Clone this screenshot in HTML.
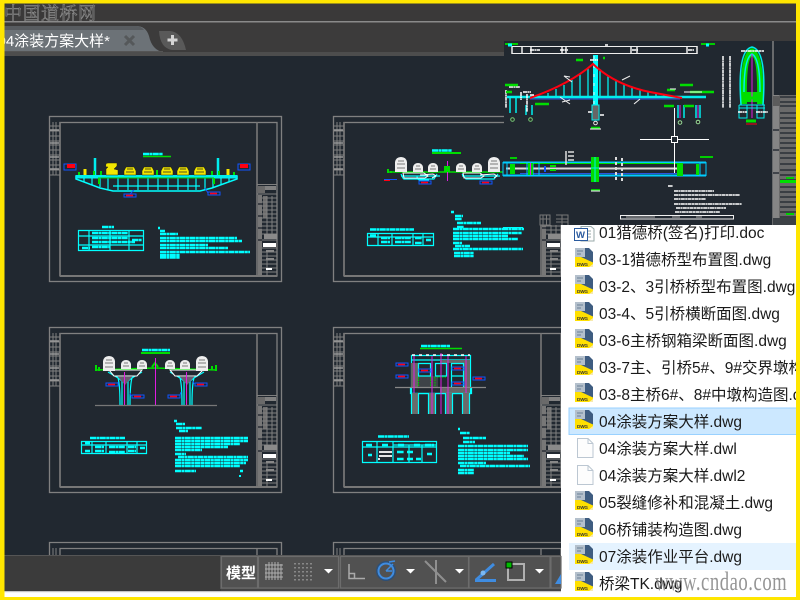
<!DOCTYPE html>
<html><head><meta charset="utf-8"><title>04涂装方案大样</title>
<style>
html,body{margin:0;padding:0;width:800px;height:600px;overflow:hidden;background:#212830}
svg{position:absolute;left:0;top:0;display:block;overflow:hidden}
.f{fill:none;stroke:#808080;stroke-width:1.3}
.g{fill:none;stroke:#808080;stroke-width:1}
.c{fill:none;stroke:#0ff;stroke-width:1.2}
.t{fill:none;stroke:#0ff;stroke-width:2.4;stroke-dasharray:6 .4 3 .4}
.w{fill:none;stroke:#fff;stroke-width:1.5;stroke-dasharray:4 .4 2 .4}
.b{fill:none;stroke:#15f;stroke-width:1}
.r{fill:none;stroke:#f01;stroke-width:1.6}
.m{fill:none;stroke:#e01ce0;stroke-width:1}
.l{font:15.5px "Liberation Sans","Noto Sans CJK SC",sans-serif;fill:#1a1a1a}
</style></head><body>
<svg width="800" height="600" viewBox="0 0 800 600" xmlns="http://www.w3.org/2000/svg">
<defs>
<g id="frame">
 <rect class="f" x="49.500" y="116.500" width="232" height="165"/>
 <rect class="f" x="60" y="122.500" width="217" height="153.500" />
 <path d="M60 276H277" stroke="#777" stroke-width="2"/>
 <path d="M60 122V276M257 122V276" stroke="#777" stroke-width="1.600"/>
 <path class="g" d="M50 126H60M50 131H60M50 136H60M50 141H60M50 145H60M50 150H60M50 155H60M50 160H60M50 165H60M50 170H60M50 175H60M53 122V175M56 122V175"/>
 <path d="M50 130H59M50 143H59M50 157H59M50 169H59" stroke="#999" stroke-width="1.500"/>
 <path class="g" d="M257 184.500H277M257 194H277"/>
 <rect x="258" y="186" width="7" height="7" fill="#6a6a6a"/>
 <rect x="265" y="186" width="11" height="4" fill="#808080"/>
 <rect x="258" y="195" width="4" height="81" fill="#777"/>
 <rect x="263" y="196" width="4" height="22" fill="#6c6c6c"/>
 <path class="g" d="M262 198H277M262 202H277M262 206H277M262 210H277M262 214H277M262 218H277M262 222H277M262 226H277M262 230H277M262 234H277M262 240H277M262 248H277M262 252H277M262 256H277M262 260H277M262 264H277M262 268H277M262 272H277M267 196V234M272 196V234M267 250V276"/>
 <path d="M258 204H262M258 216H262M258 228H262M258 240H262" stroke="#2a2f36" stroke-width="1.500"/>
 <rect x="264" y="234" width="13" height="5" fill="#8a8a8a"/>
 <rect x="263" y="243" width="13" height="4" fill="#fff"/>
 <rect x="266" y="250" width="8" height="2" fill="#888"/>
 <rect x="266" y="258" width="8" height="2" fill="#888"/>
 <rect x="266" y="268" width="6" height="2" fill="#fff"/>
</g>
<g id="frametop">
 <path d="M49.500 556V542.500H281.500V556M60 556V548.500H277V556M257 548V556" fill="none" stroke="#808080" stroke-width="1.300"/>
 <path class="g" d="M53 548V556M56 548V556"/>
</g>
<g id="veh"><path d="M-6 0V-4L-4 -8H4L6 -4V0Z" fill="#f2e600" stroke="#221" stroke-width=".5"/><path d="M-4 -3H4M-3 -6H3" stroke="#222" stroke-width=".8"/></g>
<g id="wv"><path d="M-5 0V-5Q-4 -9 0 -9Q4 -9 5 -5V0Z" fill="#eee"/><path d="M-3 -3H3M-2 -6H2" stroke="#555" stroke-width=".8"/></g>
<g id="wv2"><path d="M-6 1V-9Q-5 -14 0 -14Q5 -14 6 -9V1Z" fill="#eee"/><path d="M-4 -3H4M-4 -7H4M-3 -10H3" stroke="#555" stroke-width=".8"/></g>
<g id="lab"><path class="b" d="M0 0H12V-3H0Z"/><path class="r" d="M2 -1.500H9"/></g>
<g id="dwg">
 <path d="M0 0H14L18 4V19H0Z" fill="#3e5c80"/>
 <rect x="0" y="0" width="10" height="9" fill="#b4c0cc"/>
 <path d="M2 3H8M2 6H6" stroke="#6a7f96" stroke-width="1"/>
 <path d="M0 19V9H6L18 14.500V19Z" fill="#ffe000"/>
 <path d="M14 19L18 16V19Z" fill="#f7eab0"/>
 <text x="2" y="18" font-family="Liberation Sans,sans-serif" font-size="4.600" font-weight="700" fill="#333" textLength="11">DWG</text>
</g>
<g id="blank"><path d="M1.500 .5H12L17 5.500V19.500H1.500Z" fill="#fdfdfd" stroke="#bcc7d2"/><path d="M12 .5V5.500H17" fill="none" stroke="#bcc7d2"/></g>
<path id="tri" d="M0 0H9L4.500 4.500Z" fill="#fff"/>
</defs>

<rect width="800" height="600" fill="#212830"/>
<!-- header -->
<rect x="0" y="0" width="800" height="21" fill="#3a3939"/>
<rect x="0" y="21" width="800" height="1.500" fill="#8a8a8a"/>
<rect x="0" y="22.500" width="800" height="33" fill="#3c3b3b"/>
<text x="4" y="20" font-family="'Noto Serif CJK SC','Liberation Serif',serif" font-size="18" textLength="92" fill="none" stroke="#8a8a8a" stroke-width=".6">中国道桥网</text>
<path d="M0 26H136Q146 26 149 36Q152 50 163 52V53H0Z" fill="#6c7277"/>
<path d="M0 26H136Q141 26 144 30H0Z" fill="#585c60"/>
<path d="M0 51H163V53H0Z" fill="#555"/>
<path d="M159 31H170Q182 32 186 50H172Q160 48 159 31Z" fill="#595959"/>
<rect x="0" y="52" width="800" height="4" fill="#4d4d4d"/>
<path d="M172.500 35V45M167.500 40H177.500" stroke="#d4d4d4" stroke-width="3"/>
<text x="-2.500" y="46" font-family="'Liberation Sans','Noto Sans CJK SC',sans-serif" font-size="15" fill="#fff">04涂装方案大样*</text>
<path d="M125 36L134 45M134 36L125 45" stroke="#55585a" stroke-width="3"/>

<!-- frames -->
<use href="#frame"/>
<use href="#frame" x="284"/>
<use href="#frame" y="211"/>
<use href="#frame" x="284" y="211"/>
<use href="#frametop"/>
<use href="#frametop" x="284"/>

<!-- drawing 1 -->
<path class="t" d="M143 154H163"/><path d="M143 156.500H171" stroke="#0d0" stroke-width="1.500"/>
<path d="M76 176H237V179L212 188L200 191H113L100 188L76 179Z" fill="none" stroke="#0ff" stroke-width="1.500"/>
<rect x="76" y="175" width="161" height="3.500" fill="#0ee"/>
<path class="c" d="M84 178V182M92 178V185M100 178V187M108 178V189M118 178V190M128 178V190M138 178V190M148 178V190M158 178V190M168 178V190M178 178V190M188 178V190M196 178V190M205 178V189M213 178V187M221 178V185M229 178V182M113 186H200"/>
<path d="M95 158V175M218 158V175" stroke="#0ee" stroke-width="2.500"/>
<path d="M98 178H214" stroke="#0c0" stroke-width="1"/>
<path d="M79 175V172M94 175V171M101 175V171M157 175V170M212 175V171M219 175V171M234 175V172M99 178V184M214 178V184" stroke="#0d0" stroke-width="2"/>
<path d="M85 175V169M228 175V169" stroke="#f2e600" stroke-width="3"/>
<use href="#veh" x="130" y="175"/><use href="#veh" x="148" y="175"/><use href="#veh" x="167" y="175" /><use href="#veh" x="183" y="175"/><use href="#veh" x="200" y="175"/>
<path d="M106 175V169L108 167H106Q105 163 108 163H117V166L114 169L118 170V175Z" fill="#f2e600" stroke="#221" stroke-width=".5"/>
<rect x="64" y="164" width="12" height="6" fill="none" stroke="#15f"/><rect x="67" y="164" width="8" height="4" fill="#f01"/>
<rect x="238" y="164" width="12" height="6" fill="none" stroke="#15f"/><rect x="240" y="164" width="8" height="4" fill="#f01"/>
<use href="#lab" x="124" y="197"/><use href="#lab" x="208" y="195"/>
<path class="b" d="M130 194L134 190M208 193L205 188"/>
<path class="t" d="M102 227H114"/>
<path class="c" d="M78.500 230.500H143.500V250.500H78.500ZM78 236H144M78 245H144M89 230V250M110 230V250M129 230V250"/>
<path class="t" d="M92 233H128M92 238H128M92 242H135M92 247H110M82 248H90M132 240H142"/>
<path class="t" d="M158 228H160M160 231H165M160 234H178M160 238H237M160 241H242M160 245H208M160 248H228M160 252H250M160 255H180M160 257.500H180"/>

<!-- drawing 2 -->
<path class="t" d="M432 150.500H452"/><path d="M432 153H461" stroke="#0d0" stroke-width="2"/>
<path d="M388 172H447M447 172H503" stroke="#0d0" stroke-width="1.500"/>
<path d="M388 173V169M391 173V171" stroke="#0d0" stroke-width="2"/>
<path d="M401 174Q403 179 404 179L434 179L437 174M401 176H440M417 176Q417 180 420 180H429" class="c"/>
<path d="M403 173H424L428 176L425 178H404ZM420 175L433 174L436 176L432 178" fill="none" stroke="#fff" stroke-width="1"/>
<path d="M462 174L466 179H494L498 174M462 176H500" class="c"/>
<path d="M463 173H480L484 176L481 178H464ZM480 175L494 174L497 176L494 178" fill="none" stroke="#fff" stroke-width="1"/>
<use href="#wv2" x="401" y="171"/><use href="#wv" x="418" y="172"/><use href="#wv" x="433" y="172"/><use href="#wv" x="461" y="172"/><use href="#wv" x="477" y="172"/><use href="#wv2" x="494" y="171"/>
<path class="m" d="M447.500 161V181" stroke-width="1.500"/>
<path d="M444 166L450 166V172H444Z" fill="#0d0"/>
<path d="M384 179.500H397" stroke="#15f"/><path d="M384 180.500H390" stroke="#f01"/>
<use href="#lab" x="419" y="184"/><use href="#lab" x="480" y="184"/>
<path class="t" d="M370 229.500H414"/>
<path class="c" d="M367.500 233.500H433.500V245.500H367.500ZM367 237H433M378 233V245M392 233V245M413 233V245M423 233V245"/>
<path class="t" d="M370 235.500H376M381 238H390M395 238H411M415 238H422M381 242H390M395 242H411M415 243H422M426 240H431"/>
<path class="t" d="M451 212H454M455 216H463M455 219H462M457 223H481M457 227H464M453 229H524M453 233H522M453 236H508M453 239H518M453 243H462M455 246H470M453 249H523M454 253H474M454 256H474"/>

<!-- drawing 3 -->
<path class="t" d="M142 350H170"/><path d="M141 353H170" stroke="#0d0" stroke-width="2"/>
<path d="M95 370L155 368L217 370" fill="none" stroke="#0d0" stroke-width="1.500"/>
<path d="M96 371V365M99 371V367M152 367L155 363L158 367M212 370V366M216 371V365" stroke="#0d0" stroke-width="2" fill="none"/>
<path class="c" d="M108 372L118 378Q120 385 120 405M142 372L132 378Q130 385 130 405M112 373L122 381V405M138 373L128 381V405M170 372L180 378Q182 385 182 405M204 372L194 378Q192 385 192 405M174 373L184 381V405M200 373L190 381V405"/>
<path d="M109 370H142L137 376H114ZM170 370H203L197 376H175Z" fill="#212830" stroke="#fff" stroke-width="1"/>
<path d="M118 377L125 385L132 377ZM180 377L187 385L194 377Z" fill="#6a5a70"/>
<use href="#wv2" x="109" y="370"/><use href="#wv" x="126" y="369"/><use href="#wv" x="142" y="369"/><use href="#wv" x="170" y="369"/><use href="#wv" x="185" y="369"/><use href="#wv2" x="202" y="370"/>
<path class="m" d="M155.500 358V405M124.500 372V405M186.500 372V405" stroke-width="1.300"/>
<path d="M95 405.500H217" stroke="#777" stroke-width="1.200"/>
<use href="#lab" x="106" y="386"/><use href="#lab" x="132" y="398"/><use href="#lab" x="168" y="398"/><use href="#lab" x="195" y="386"/>
<path class="b" d="M118 385L118 382M131 396L130 393M180 395L181 392M194 384L193 381"/>
<path class="t" d="M90 438H125"/>
<path class="c" d="M81.500 441.500H146.500V453.500H81.500ZM81 445H147M92 441V453M106 441V453M127 441V453M137 441V453"/>
<path class="t" d="M85 443H90M95 447H104M109 447H125M128 447H136M140 448H145M85 451H90M95 451H104M109 452H125M128 451H136"/>
<path class="t" d="M174 421H177M176 424H185M176 428H202M179 431H188M175 438H248M175 441H248M175 444H240M175 447H228M175 450H202M175 454H186M178 457H248M175 460H248M175 463H246M175 466H240M175 471H196M240 471H243"/>
<path d="M239 476H241" stroke="#0ff" stroke-width="2"/>

<!-- drawing 4 -->
<path class="t" d="M421 346H450"/><path d="M420 348.500H462" stroke="#0d0" stroke-width="1.500"/>
<path class="c" d="M411.500 355.500H470.500V393.500H411.500ZM411 360H470"/>
<path d="M412 355H470" stroke="#fff" stroke-width="1.500" stroke-dasharray="3 4"/>
<rect x="411" y="363" width="7" height="24" fill="#666"/>
<rect x="440" y="360" width="30" height="3" fill="#666"/>
<rect x="418" y="376" width="20" height="11" fill="#3e4348"/>
<rect x="463" y="363" width="7" height="24" fill="#666"/>
<path class="c" d="M418.500 363.500H430.500V376H418.500ZM435.500 363.500H446.500V376H435.500ZM451.500 363.500H463.500V376H451.500ZM451.500 376V387M463.500 376V387"/>
<path d="M418.500 377V387M430.500 377V387M435 377V387M437 377H446" stroke="#0c0" stroke-dasharray="1.500 1" fill="none"/>
<path d="M395 387.500H486" stroke="#888" stroke-width="1.200"/>
<rect x="440" y="388" width="30" height="5" fill="#666"/>
<path class="c" d="M410.500 388V393.500H471.500V388"/>
<g fill="#6a6a6a"><rect x="412" y="393" width="6" height="21"/><rect x="429" y="393" width="6" height="21"/><rect x="446" y="393" width="6" height="21"/><rect x="463" y="393" width="6" height="21"/></g>
<path class="c" d="M411.500 394V414M418.500 394V414M428.500 394V414M435.500 394V414M445.500 394V414M452.500 394V414M462.500 394V414M469.500 394V414"/>
<path class="m" d="M414 356V393M432 356V414M441 353V414M448 356V414M466 356V393" stroke-width="1.300"/>
<use href="#lab" x="396" y="366"/><use href="#lab" x="396" y="378"/><use href="#lab" x="473" y="380"/><use href="#lab" x="452" y="385"/><use href="#lab" x="419" y="372"/><use href="#lab" x="452" y="370"/>
<path class="t" d="M378 436.500H409"/>
<path class="c" d="M362.500 441.500H436.500V462.500H362.500ZM362 447H436M377 441V462M393 441V462M409 445V462M422 445V462M393 445H436"/>
<path class="t" d="M366 445H372M382 445H388M398 445H404M414 445H420M425 445H434M368 455H372M397 452H404M407 452H413M397 459H404M407 459H413M416 459H421M427 454H432"/>
<path d="M379 452H392M379 456H392M378 459H380" stroke="#fff" stroke-width="1.800"/>
<path class="t" d="M458 429H460M460 433H470M463 438H486M463 442H475M458 446H528M458 450H528M458 453H510M458 456H524M458 459H528M458 463H486M460 466H530M458 470H474M458 473H474"/>

<!-- overlay drawing -->
<rect x="504" y="41" width="292" height="184" fill="#212830"/>
<path d="M512 46.500H697M512 53.500H697" stroke="#eee" stroke-width="1"/>
<path d="M512 46V54M697 46V54M522 46V54M531 46V54M562 46V54M566 46V54M631 46V54M637 46V54M687 46V54" stroke="#eee" stroke-width="1.500"/>
<path class="w" d="M530 50H540M560 50H568M605 45H608M632 50H638M688 50H694"/>
<path d="M505 44H518M701 44H715" stroke="#0c0" stroke-width="2"/><path d="M512 45H508M706 45H709" stroke="#0ff" stroke-width="3"/>
<path class="c" d="M540 96V98M548 93V98M556 89V98M564 85V98M572 80V98M580 74V98M588 68V98M600 70V98M608 76V98M616 81V98M624 84V98M632 87V98M640 90V98M648 92V98M656 94V98M664 95V98M672 96V98" stroke-width="1"/>
<path d="M507 97H706" stroke="#0ee" stroke-width="2.500"/>
<path d="M530 99H680" stroke="#2d55e0" stroke-width="1"/>
<rect x="593" y="55" width="5" height="65" fill="#0ff"/>
<path d="M594 56V118" stroke="#eee" stroke-dasharray="3 6" stroke-width="1"/>
<path d="M530 98Q570 84 593 64Q615 85 650 92L682 98" fill="none" stroke="#f01" stroke-width="2"/>
<rect x="592" y="105" width="7" height="15" fill="#666" stroke="#0ee"/>
<path d="M510 98V113M516 98V113M526 105V115M532 105V115M678 105V118M684 105V118M696 105V118M700 105V118" stroke="#0ee" stroke-width="1.500"/>
<path class="m" d="M680 105V118M698 105V118" stroke-width="1.500"/>
<path class="w" d="M506 90V108M521 92V100M527 94V112M534 95H530M509 87H520M523 92H531M588 112H592M600 115H604M590 60H598"/>
<circle cx="512.500" cy="119.500" r="1.800" fill="#222" stroke="#7c7"/><circle cx="530.500" cy="119.500" r="1.800" fill="#222" stroke="#7c7"/><circle cx="595.500" cy="123" r="1.800" fill="#222" stroke="#eee"/><circle cx="680" cy="122.500" r="1.800" fill="#222" stroke="#9d9"/><circle cx="698" cy="122" r="1.800" fill="#222" stroke="#9d9"/>
<g stroke="#0d0" stroke-width="2.500"><path d="M505 85H518M506 92H512M576 60H583M603 58H605M535 104H549M680 85H693M667 90H675M664 106H674M684 106H694M690 92H714M591 128H600"/></g>
<path d="M590 129H601M670 89H676M684 92H702" stroke="#fff" stroke-width="1"/>
<path d="M560 97L570 104M562 102L570 100M570 77L564 76L572 82M630 76L622 80M640 99L634 104" stroke="#eee" fill="none"/>
<!-- plan -->
<path d="M503 162.500H706M503 175.500H706" stroke="#0cf" stroke-width="2"/>
<path d="M520 163.500H680" stroke="#0d0" stroke-width="1"/>
<path d="M506 168.500H682" stroke="#ddd" stroke-width="2"/>
<path d="M520 173.500H680" stroke="#2d55e0" stroke-width="1"/>
<path d="M503 162V176M507 162V176M527 162V176M533 162V176M539 162V176M680 162V176M700 162V176M706 162V176" stroke="#0cf"/>
<rect x="510" y="164" width="5" height="10" fill="#0d0"/><rect x="528" y="163" width="5" height="12" fill="#0d0"/><path d="M530.500 163V175" stroke="#e01ce0"/>
<rect x="591" y="157" width="8" height="25" fill="#0d0"/><path d="M591 168H599M595 157V182" stroke="#0ee"/>
<rect x="677" y="163" width="6" height="13" fill="#0d0"/><rect x="696" y="164" width="3" height="11" fill="#0d0"/>
<path d="M550 166H556M550 170H556" stroke="#0d0" stroke-width="2"/>
<path d="M545 166V172" stroke="#15f" stroke-width="2"/>
<path d="M616 157V182M622 158V182" stroke="#ddd" stroke-width="2" stroke-dasharray="3 2"/>
<path d="M566 151V165M568 152H574M568 156H574M568 160H574" stroke="#ddd" stroke-width="1.500"/>
<path d="M510 158H517M700 157H713" stroke="#0c0" stroke-width="2"/>
<path d="M591 190H600" stroke="#0c0" stroke-width="2"/><path d="M591 191H600" stroke="#fff"/>
<!-- notes in overlay -->
<path class="w" d="M668 186H673M674 191H714M674 195H740M674 199H706M674 204H742M676 208H726M675 212H720" stroke-width="1.700"/>
<path d="M620.500 215.500H733.500V219H620.500Z" fill="none" stroke="#eee"/>
<path d="M626 217H655M672 217H680M696 217H702" stroke="#aaa" stroke-width="1"/>
<rect x="503" y="227" width="20" height="1" fill="#0ff"/>
<g fill="none" stroke="#777"><path d="M540 215H550V225H540ZM543 215V225M546.500 215V225M556 215H568V225M562 215V225M556 219H568M540 219H550M556 222H568"/></g>
<!-- side elevation -->
<path d="M741 104Q739 52 752 48Q765 52 763 104H757Q758 60 752 56Q746 60 747 104Z" fill="#0d0"/>
<path d="M741 105Q737 50 752 47Q767 50 763 105M744 92Q744 58 752 54Q760 58 760 92" fill="none" stroke="#0ee" stroke-width="1.500"/>
<path d="M745 102L746 92H758L759 102Z" fill="#0d0"/>
<path d="M752 54V105M752 105V118" stroke="#e01ce0" stroke-width="1"/>
<path d="M745 98H760" stroke="#0d0" stroke-width="3"/>
<path d="M739 105H765M739 108H765" stroke="#0ee"/>
<path d="M739 105V118H747V105M757 105V118H764V105" fill="none" stroke="#0ee"/>
<path class="w" d="M738 112H747M756 112H768M741 51H764M730 56V108M723 56V108" stroke-width="1"/>
<path d="M746 121H756" stroke="#0d0" stroke-width="3"/><path d="M746 124H757" stroke="#f01"/>
<!-- overlay title block -->
<path d="M773 41V225" stroke="#808080" stroke-width="1.500"/>
<rect x="773" y="95" width="23" height="130" fill="#6a6a6a"/>
<rect x="773" y="95" width="6" height="130" fill="#858585"/>
<rect x="773" y="96" width="7" height="10" fill="#5c5c5c"/>
<path d="M780 97H796M780 102H796M780 106H796M780 113H796M780 118H796M780 123H796M780 128H796M780 133H796M780 138H796M780 143H796M780 148H796M780 153H796M780 158H796M780 164H796M780 170H796M780 175H796M780 180H796M780 187H796M780 192H796M780 197H796M780 202H796M780 207H796M780 212H796M780 217H796" stroke="#2a2f36" stroke-width="1.400"/>
<path d="M773 130H779M773 150H779M773 173H779" stroke="#2a2f36" stroke-width="1.500"/>
<rect x="780" y="180" width="16" height="3" fill="#00e000"/>
<rect x="786" y="177" width="8" height="2" fill="#00d000"/>
<rect x="786" y="213" width="8" height="2" fill="#00d000"/>
<rect x="773" y="218" width="23" height="7" fill="#3c4146"/>

<!-- crosshair -->
<path d="M640 139.500H671M678 139.500H709M674.500 108V136M674.500 143V173" stroke="#fff" stroke-width="1"/>
<rect x="671.500" y="136.500" width="6" height="6" fill="none" stroke="#fff"/>

<!-- list -->
<rect x="561" y="225" width="235" height="372" fill="#fff"/>
<rect x="569" y="408" width="228" height="26.500" fill="#cce8ff" stroke="#99d1ff"/>
<rect x="569" y="543" width="228" height="27" fill="#e5f3ff"/>
<!-- word icon -->
<g transform="translate(574,226)"><path d="M7 .5H17L20 3V15H7Z" fill="#fff" stroke="#9aa"/><path d="M11 5H17M11 8H17M11 11H17" stroke="#9aa"/><rect x=".5" y="2.500" width="13" height="12" fill="#fff" stroke="#2a5a9e"/><text x="2" y="12" font-family="Liberation Sans,sans-serif" font-size="9.500" font-weight="700" fill="#2a5a9e">W</text></g>
<use href="#dwg" x="575" y="248"/><use href="#dwg" x="575" y="275"/><use href="#dwg" x="575" y="302"/><use href="#dwg" x="575" y="329"/><use href="#dwg" x="575" y="356"/><use href="#dwg" x="575" y="383"/><use href="#dwg" x="575" y="410"/>
<use href="#blank" x="576" y="438"/><use href="#blank" x="576" y="465"/>
<use href="#dwg" x="575" y="491"/><use href="#dwg" x="575" y="518"/><use href="#dwg" x="575" y="545"/><use href="#dwg" x="575" y="572"/>
<text class="l" x="599" y="238">01猎德桥(签名)打印.doc</text>
<text class="l" x="599" y="265">03-1猎德桥型布置图.dwg</text>
<text class="l" x="599" y="292">03-2、3引桥桥型布置图.dwg</text>
<text class="l" x="599" y="319">03-4、5引桥横断面图.dwg</text>
<text class="l" x="599" y="346">03-6主桥钢箱梁断面图.dwg</text>
<text class="l" x="599" y="373">03-7主、引桥5#、9#交界墩构造图.dwg</text>
<text class="l" x="599" y="400">03-8主桥6#、8#中墩构造图.dwg</text>
<text class="l" x="599" y="427">04涂装方案大样.dwg</text>
<text class="l" x="599" y="454">04涂装方案大样.dwl</text>
<text class="l" x="599" y="481">04涂装方案大样.dwl2</text>
<text class="l" x="599" y="508">05裂缝修补和混凝土.dwg</text>
<text class="l" x="599" y="535">06桥铺装构造图.dwg</text>
<text class="l" x="599" y="562">07涂装作业平台.dwg</text>
<text class="l" x="599" y="589">桥梁TK.dwg</text>
<text transform="translate(655,590) scale(.72,1)" font-family="'Liberation Serif',serif" font-size="26" textLength="183" lengthAdjust="spacing" fill="#7a7a7a" fill-opacity=".8">www.cndao.com</text>

<!-- status bar -->
<rect x="0" y="555" width="561" height="36" fill="#3b3b3b"/>
<rect x="0" y="555" width="561" height="1" fill="#555"/>
<rect x="0" y="591" width="561" height="6" fill="#fff"/>
<rect x="0" y="591" width="561" height="1.200" fill="#c4c4c4"/>
<rect x="220" y="556" width="341" height="33" fill="#565656"/>
<rect x="221" y="589" width="340" height="2" fill="#444"/>
<g fill="#515151" stroke="#6c6c6c" stroke-width="1.200"><rect x="221.500" y="556.500" width="36" height="31.500"/><rect x="258.500" y="556.500" width="80" height="31.500"/><rect x="340.500" y="556.500" width="128" height="31.500"/><rect x="469" y="556.500" width="81" height="31.500"/><rect x="551" y="556.500" width="10" height="31.500"/></g>
<text x="226" y="578" font-family="'Liberation Sans','Noto Sans CJK SC',sans-serif" font-size="15" font-weight="700" fill="#fff" textLength="30">模型</text>
<path d="M266 564V580M269 562V580M272 562V580M275 562V580M278 562V580M281 564V580M265 565H283M265 569H283M265 573H283M265 577H283" stroke="#b0b0b0" stroke-width="1"/>
<path d="M295 563V581M299 563V581M303 563V581M307 563V581M311 563V581" stroke="#9a9a9a" stroke-width="1.500" stroke-dasharray="1.500 2.500"/>
<use href="#tri" x="324" y="569"/>
<path d="M349 564V578.500H365M349 573.500H354.500V578" fill="none" stroke="#aaa" stroke-width="1.500"/>
<circle cx="386" cy="571" r="10" fill="#2c4f78"/>
<circle cx="386" cy="571" r="7.500" fill="#515151" stroke="#3f8ce0" stroke-width="2"/>
<path d="M386 571L393 564M386 571H392M389 562L395 561" stroke="#3f8ce0" stroke-width="1.500" fill="none"/>
<use href="#tri" x="406" y="569"/>
<path d="M425 561L446 582M436 560V584" stroke="#8f8f8f" stroke-width="2"/>
<use href="#tri" x="455" y="569"/>
<path d="M475 580.500H496" stroke="#3f8ce0" stroke-width="3"/>
<path d="M476 580L494 564" stroke="#3f8ce0" stroke-width="3"/>
<circle cx="483" cy="573" r="2.500" fill="#7cb8f0"/>
<rect x="508" y="564" width="16" height="16" fill="none" stroke="#b0b0b0" stroke-width="2"/>
<rect x="506" y="562" width="6" height="6" fill="#0b0" stroke="#000" stroke-width="1"/>
<use href="#tri" x="535" y="569"/>
<path d="M555 584L561 574V584Z" fill="#3f8ce0"/>

<!-- yellow screen border -->
<path fill-rule="evenodd" d="M0 0H800V600H0ZM4.500 3.500V597H796V3.500Z" fill="#ffe600"/>
</svg>
</body></html>
